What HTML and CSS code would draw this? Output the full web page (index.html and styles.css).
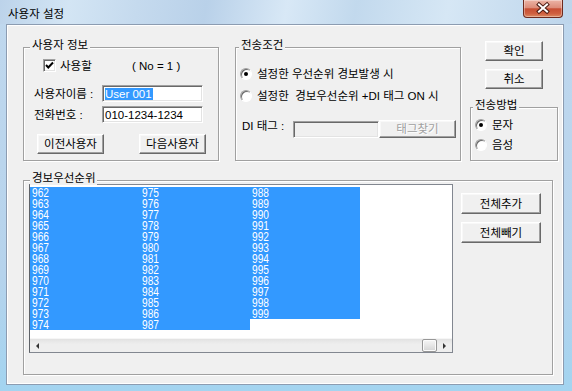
FILE: index.html
```html
<!DOCTYPE html>
<html lang="ko">
<head>
<meta charset="utf-8">
<title>사용자 설정</title>
<link rel="stylesheet" href="styles.css">
</head>
<body>
<div class="window">
  <div class="titlebar">
    <span class="title">사용자 설정</span>
    <div class="close">
      <svg width="38" height="17" viewBox="0 0 38 17">
        <path d="M15 4.5 L23 11.5 M23 4.5 L15 11.5" stroke="#4a1a12" stroke-width="4" stroke-linecap="square" fill="none"/>
        <path d="M15 4.5 L23 11.5 M23 4.5 L15 11.5" stroke="#ffffff" stroke-width="2" stroke-linecap="square" fill="none"/>
      </svg>
    </div>
  </div>
  <div class="client">
    <div class="top-row">
      <div class="group g-user">
        <div class="group-title t-user">사용자 정보</div>
        <div class="row r-check">
          <span class="checkbox">
            <svg width="11" height="11" viewBox="0 0 11 11"><path d="M2 5 L4.3 7.5 L9 2.5" stroke="#000" stroke-width="2" fill="none"/></svg>
          </span>
          <span class="chk-label">사용할</span>
          <span class="txt">( No = 1 )</span>
        </div>
        <div class="row r-field r-name">
          <span class="field-label">사용자이름 :</span>
          <div class="input"><span class="sel">User 001</span></div>
        </div>
        <div class="row r-field r-phone">
          <span class="field-label">전화번호 :</span>
          <div class="input">010-1234-1234</div>
        </div>
        <div class="row r-buttons">
          <div class="btn b-user">이전사용자</div>
          <div class="btn b-user">다음사용자</div>
        </div>
      </div>

      <div class="group g-cond">
        <div class="group-title t-cond">전송조건</div>
        <div class="row r-radio r-radio1">
          <span class="radio checked"></span>
          <span class="radio-label">설정한 우선순위 경보발생 시</span>
        </div>
        <div class="row r-radio r-radio2">
          <span class="radio"></span>
          <span class="radio-label">설정한&nbsp; 경보우선순위 +DI 태그 ON 시</span>
        </div>
        <div class="row r-di">
          <span class="di-label">DI 태그 :</span>
          <div class="input disabled di-input"></div>
          <div class="btn disabled b-find">태그찾기</div>
        </div>
      </div>

      <div class="right-col">
        <div class="btn b-ok">확인</div>
        <div class="btn b-cancel">취소</div>
        <div class="group g-method">
          <div class="group-title t-method">전송방법</div>
          <div class="row r-radio r-sms">
            <span class="radio checked"></span>
            <span class="radio-label">문자</span>
          </div>
          <div class="row r-radio r-voice">
            <span class="radio"></span>
            <span class="radio-label">음성</span>
          </div>
        </div>
      </div>
    </div>

    <div class="group g-alarm">
      <div class="group-title t-alarm">경보우선순위</div>
      <div class="alarm-row">
        <div class="listbox">
          <div class="list-area">
            <div class="item"><span>962</span></div>
            <div class="item"><span>963</span></div>
            <div class="item"><span>964</span></div>
            <div class="item"><span>965</span></div>
            <div class="item"><span>966</span></div>
            <div class="item"><span>967</span></div>
            <div class="item"><span>968</span></div>
            <div class="item"><span>969</span></div>
            <div class="item"><span>970</span></div>
            <div class="item"><span>971</span></div>
            <div class="item"><span>972</span></div>
            <div class="item"><span>973</span></div>
            <div class="item"><span>974</span></div>
            <div class="item"><span>975</span></div>
            <div class="item"><span>976</span></div>
            <div class="item"><span>977</span></div>
            <div class="item"><span>978</span></div>
            <div class="item"><span>979</span></div>
            <div class="item"><span>980</span></div>
            <div class="item"><span>981</span></div>
            <div class="item"><span>982</span></div>
            <div class="item"><span>983</span></div>
            <div class="item"><span>984</span></div>
            <div class="item"><span>985</span></div>
            <div class="item"><span>986</span></div>
            <div class="item"><span>987</span></div>
            <div class="item"><span>988</span></div>
            <div class="item"><span>989</span></div>
            <div class="item"><span>990</span></div>
            <div class="item"><span>991</span></div>
            <div class="item"><span>992</span></div>
            <div class="item"><span>993</span></div>
            <div class="item"><span>994</span></div>
            <div class="item"><span>995</span></div>
            <div class="item"><span>996</span></div>
            <div class="item"><span>997</span></div>
            <div class="item"><span>998</span></div>
            <div class="item"><span>999</span></div>
          </div>
          <div class="hscroll">
            <div class="sb-arrow sb-left"><span class="tri-left"></span></div>
            <div class="sb-track"><div class="sb-thumb"></div></div>
            <div class="sb-arrow sb-right"><span class="tri-right"></span></div>
          </div>
        </div>
        <div class="side-btns">
          <div class="btn b-side">전체추가</div>
          <div class="btn b-side b-side2">전체빼기</div>
        </div>
      </div>
    </div>
  </div>
</div>
</body>
</html>
```

FILE: styles.css
```css
* { box-sizing: border-box; }
html, body { margin: 0; padding: 0; }
body {
  width: 572px;
  height: 391px;
  overflow: hidden;
  font-family: "Liberation Sans", "Noto Sans CJK KR", sans-serif;
  font-size: 11.5px;
  line-height: 14px;
  color: #000;
  background: #fff;
}

.window {
  width: 572px;
  height: 391px;
  display: flex;
  flex-direction: column;
  background: linear-gradient(180deg, #c0d8ee 0%, #b6d3ec 70%, #a3d4f0 100%);
}

/* ---------- title bar ---------- */
.titlebar {
  height: 24px;
  flex: none;
  display: flex;
  align-items: flex-start;
  padding-left: 8px;
  background: linear-gradient(100deg, #bcd3ea 0%, #d3e5f4 12%, #c5daee 24%, #b9d1e9 36%, #d8e8f6 50%, #c2d9ed 62%, #d6e7f5 78%, #bdd5eb 100%);
}
.title {
  margin-top: 7px;
  line-height: 14px;
  font-size: 11.5px;
  color: #000;
}
.close {
  margin-left: auto;
  margin-right: 9px;
  width: 40px;
  height: 18px;
  border: 1px solid #6e2a1e;
  border-top: none;
  border-radius: 0 0 4px 4px;
  background: linear-gradient(180deg, #ecb4a6 0%, #dd8d7a 45%, #c74e33 52%, #cf6040 80%, #dc8a62 100%);
  box-shadow: inset 0 0 0 1px rgba(255,255,255,0.35);
  display: flex;
  align-items: center;
  justify-content: center;
}
.close svg { display: block; }

/* ---------- client ---------- */
.client {
  flex: 1;
  margin: 0 8px 6px 6px;
  background: #f0f0f0;
  border: 1px solid #8c9cb1;
  box-shadow: inset 1px 1px 0 #fff, inset -1px -1px 0 #fff;
  padding: 16px 0 0 16px;
}

.top-row {
  display: flex;
  align-items: flex-start;
}

/* ---------- group boxes ---------- */
.group {
  position: relative;
  border: 1px solid #a0a0a0;
  box-shadow: inset 1px 1px 0 #fff, 1px 1px 0 #fff;
}
.group-title {
  position: absolute;
  top: -10px;
  left: 6px;
  padding: 0 2px;
  line-height: 14px;
  background: #f0f0f0;
  white-space: nowrap;
}
.t-cond { left: 3px; }
.t-method { left: 2px; }

.row {
  display: flex;
  align-items: center;
  white-space: nowrap;
}

.g-user {
  margin-top: 6px;
  width: 196px;
  height: 114px;
}
.g-cond {
  margin-top: 6px;
  margin-left: 16px;
  width: 226px;
  height: 114px;
}
.right-col {
  margin-left: 9px;
  width: 88px;
  display: flex;
  flex-direction: column;
}
.g-method {
  margin-top: 18px;
  width: 88px;
  height: 54px;
}
.g-alarm {
  margin-top: 19px;
  width: 530px;
  height: 195px;
}

/* ---------- controls ---------- */
.btn {
  display: flex;
  align-items: center;
  justify-content: center;
  background: #f0f0f0;
  border: 1px solid;
  border-color: #ffffff #696969 #696969 #ffffff;
  box-shadow: inset -1px -1px 0 #a0a0a0, inset 1px 1px 0 #f8f8f8;
  line-height: 14px;
  white-space: nowrap;
}
.btn.disabled {
  color: #a0a0a0;
  text-shadow: 1px 1px 0 #fff;
}

.input {
  display: flex;
  align-items: center;
  background: #fff;
  border: 1px solid;
  border-color: #a0a0a0 #ffffff #ffffff #a0a0a0;
  box-shadow: inset 1px 1px 0 #696969, inset -1px -1px 0 #e3e3e3;
  padding-left: 2px;
  line-height: 14px;
  white-space: nowrap;
}
.input.disabled { background: #f0f0f0; }
.sel {
  background: #3399ff;
  color: #fff;
  line-height: 12px;
  padding: 0 1px 0 0;
}

.checkbox {
  width: 13px;
  height: 13px;
  flex: none;
  background: #fff;
  border: 1px solid;
  border-color: #a0a0a0 #ffffff #ffffff #a0a0a0;
  box-shadow: inset 1px 1px 0 #696969, inset -1px -1px 0 #e3e3e3;
  display: flex;
  align-items: center;
  justify-content: center;
}
.checkbox svg { display: block; }

.radio {
  width: 12px;
  height: 12px;
  flex: none;
  border-radius: 50%;
  background: #fff;
  border: 1px solid;
  border-color: #a0a0a0 #ffffff #ffffff #a0a0a0;
  box-shadow: inset 1px 1px 0 #696969;
  display: flex;
  align-items: center;
  justify-content: center;
}
.radio.checked::after {
  content: "";
  width: 4px;
  height: 4px;
  border-radius: 50%;
  background: #000;
}
.radio-label { margin-left: 5px; }

/* ---------- group 1 : user ---------- */
.r-check {
  margin-top: 11px;
  margin-left: 19px;
  height: 13px;
}
.chk-label {
  margin-left: 4px;
  width: 72px;
}
.r-name {
  margin-top: 13px;
  margin-left: 10px;
  height: 17px;
}
.r-phone {
  margin-top: 4px;
  margin-left: 10px;
  height: 17px;
}
.field-label { width: 68px; }
.r-field .input {
  width: 101px;
  height: 17px;
}
.r-buttons {
  margin-top: 11px;
  margin-left: 13px;
  gap: 35px;
}
.b-user {
  width: 67px;
  height: 20px;
}

/* ---------- group 2 : condition ---------- */
.r-radio1 {
  margin-top: 19px;
  margin-left: 4px;
  height: 13px;
}
.r-radio2 {
  margin-top: 9px;
  margin-left: 4px;
  height: 13px;
}
.r-di {
  margin-top: 18px;
  margin-left: 6px;
  height: 18px;
  align-items: flex-start;
}
.di-label {
  width: 51px;
  margin-top: -1px;
}
.di-input {
  width: 86px;
  height: 17px;
  margin-top: 1px;
}
.b-find {
  width: 77px;
  height: 18px;
}

/* ---------- right column ---------- */
.b-ok {
  margin-left: 15px;
  width: 58px;
  height: 20px;
}
.b-cancel {
  margin-top: 8px;
  margin-left: 15px;
  width: 58px;
  height: 20px;
}
.r-sms {
  margin-top: 11px;
  margin-left: 4px;
  height: 12px;
}
.r-voice {
  margin-top: 8px;
  margin-left: 4px;
  height: 12px;
}

/* ---------- group 4 : alarm priority ---------- */
.alarm-row {
  display: flex;
  align-items: flex-start;
}
.listbox {
  margin-left: 5px;
  margin-top: 3px;
  width: 424px;
  height: 169px;
  border: 1px solid #828790;
  border-left-color: #5f6368;
  background: #fff;
  display: flex;
  flex-direction: column;
}
.list-area {
  height: 153px;
  padding-top: 2px;
  display: grid;
  grid-auto-flow: column;
  grid-template-rows: repeat(13, 11px);
  grid-auto-columns: 110px;
  align-content: start;
}
.item {
  background: #3399ff;
  color: #fff;
  font-family: "Liberation Sans", sans-serif;
  font-size: 9.5px;
  line-height: 11px;
  padding-left: 2px;
  display: flex;
  align-items: center;
}
.item span {
  display: inline-block;
  line-height: 8px;
  transform: scale(1.07, 1.3);
  transform-origin: left center;
}
.hscroll {
  height: 14px;
  display: flex;
  background: linear-gradient(180deg, #e2e2e2 0%, #eeeeee 40%, #eeeeee 100%);
  border-top: 1px solid #f6f6f6;
}
.sb-arrow {
  width: 15px;
  flex: none;
  display: flex;
  align-items: center;
  justify-content: center;
}
.sb-track {
  flex: 1;
  display: flex;
  justify-content: flex-end;
  align-items: stretch;
}
.sb-thumb {
  width: 15px;
  border: 1px solid #979797;
  border-radius: 2px;
  background: linear-gradient(180deg, #f6f6f6 0%, #e6e6e6 50%, #d4d4d4 100%);
  box-shadow: inset 0 0 0 1px #fbfbfb;
}
.tri-left {
  width: 0;
  height: 0;
  border-top: 3px solid transparent;
  border-bottom: 3px solid transparent;
  border-right: 3px solid #333;
}
.tri-right {
  width: 0;
  height: 0;
  border-top: 3px solid transparent;
  border-bottom: 3px solid transparent;
  border-left: 3px solid #333;
}
.side-btns {
  margin-left: 8px;
  margin-top: 12px;
  display: flex;
  flex-direction: column;
}
.b-side {
  width: 80px;
  height: 21px;
}
.b-side2 { margin-top: 8px; }
```
